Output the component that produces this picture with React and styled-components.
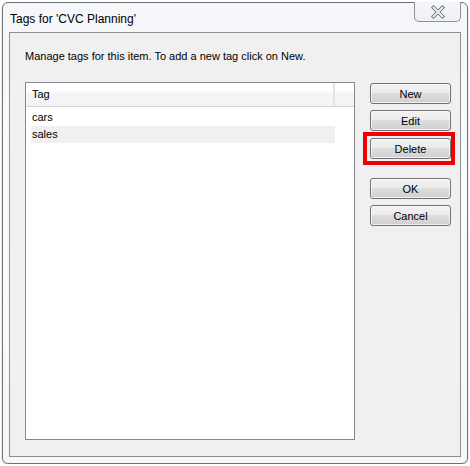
import styled, { createGlobalStyle } from "styled-components";

const GlobalStyle = createGlobalStyle`
  body {
    margin: 0;
    background: #ffffff;
    font-family: "Liberation Sans", Arial, sans-serif;
    font-size: 11px;
    color: #000;
  }
`;

const Window = styled.div`
  margin: 2px 0 0 2px;
  width: 466px;
  height: 462px;
  border: 1px solid #6f7275;
  border-radius: 6px;
  background: linear-gradient(180deg, #f4f6f9 0%, #fbfcfd 40%, #f6f7f9 100%);
  box-shadow: 0 1px 2px rgba(0, 0, 0, 0.25);
  display: flex;
  flex-direction: column;
  padding: 0 6px 6px 6px;
  box-sizing: border-box;
`;

const TitleBar = styled.div`
  height: 29px;
  display: flex;
  justify-content: space-between;
  align-items: flex-start;
`;

const Title = styled.div`
  padding: 9px 0 0 1px;
  font-size: 12px;
`;

const CloseButton = styled.div`
  width: 45px;
  height: 19px;
  margin-top: -1px;
  border: 1px solid #8d9196;
  border-top: none;
  border-radius: 0 0 5px 5px;
  background: linear-gradient(180deg, #f6f7f9, #eef0f3);
  display: flex;
  align-items: center;
  justify-content: center;
`;

const Panel = styled.div`
  flex: 1;
  border: 1px solid #8e8f94;
  background: #f0f0f0;
  padding: 16px 9px 16px 15px;
  display: flex;
  flex-direction: column;
  box-sizing: border-box;
`;

const Description = styled.div`
  line-height: 15px;
  margin-bottom: 18px;
`;

const Body = styled.div`
  flex: 1;
  display: flex;
  gap: 15px;
`;

const ListBox = styled.div`
  width: 330px;
  flex-shrink: 0;
  border: 1px solid #828790;
  background: #fff;
  box-sizing: border-box;
`;

const Header = styled.div`
  height: 24px;
  display: flex;
  border-bottom: 1px solid #d5d5d5;
  background: linear-gradient(180deg, #ffffff 0%, #ffffff 30%, #f3f4f6 50%, #f3f4f6 100%);
  box-sizing: border-box;
`;

const HeaderCell = styled.div`
  width: 309px;
  padding-left: 6px;
  box-sizing: border-box;
  line-height: 23px;
  border-right: 2px solid #e3e4e6;
`;

const Rows = styled.div`
  padding: 2px 0 0 5px;
`;

const Row = styled.div`
  width: 304px;
  height: 17px;
  line-height: 17px;
  padding-left: 1px;
  box-sizing: border-box;
  background: ${(p) => (p.$selected ? "#f0f0f0" : "transparent")};
`;

const Buttons = styled.div`
  width: 81px;
  flex-shrink: 0;
  display: flex;
  flex-direction: column;
  padding-top: 1px;
`;

const Highlight = styled.div`
  margin: 1px -4px 0 -7px;
  padding: 2px 0 2px 3px;
  border: 4px solid #f00000;
  width: 92px;
  box-sizing: border-box;
`;

const Button = styled.div`
  width: 81px;
  height: 21px;
  box-sizing: border-box;
  border: 1px solid #707070;
  border-radius: 3px;
  background: linear-gradient(180deg, #f2f2f2 0%, #ebebeb 49%, #dddddd 50%, #cfcfcf 100%);
  box-shadow: inset 0 0 0 1px rgba(255, 255, 255, 0.7);
  display: flex;
  align-items: center;
  justify-content: center;
  margin-top: ${(p) => p.$gap || 0}px;
`;

const CloseIcon = () => (
  <svg width="16" height="14" viewBox="0 0 16 14">
    <path d="M3.5 2.5 L12.5 11.5 M12.5 2.5 L3.5 11.5" stroke="#6a707a" strokeWidth="3.6" strokeLinecap="square" />
    <path d="M3.5 2.5 L12.5 11.5 M12.5 2.5 L3.5 11.5" stroke="#f5f6f8" strokeWidth="1.8" strokeLinecap="square" />
  </svg>
);

const App = () => {
  const tags = ["cars", "sales"];
  return (
    <>
      <GlobalStyle />
      <Window>
        <TitleBar>
          <Title>Tags for 'CVC Planning'</Title>
          <CloseButton>
            <CloseIcon />
          </CloseButton>
        </TitleBar>
        <Panel>
          <Description>Manage tags for this item. To add a new tag click on New.</Description>
          <Body>
            <ListBox>
              <Header>
                <HeaderCell>Tag</HeaderCell>
              </Header>
              <Rows>
                {tags.map((t, i) => (
                  <Row key={t} $selected={i === 1}>
                    {t}
                  </Row>
                ))}
              </Rows>
            </ListBox>
            <Buttons>
              <Button>New</Button>
              <Button $gap={6}>Edit</Button>
              <Highlight>
                <Button>Delete</Button>
              </Highlight>
              <Button $gap={13}>OK</Button>
              <Button $gap={6}>Cancel</Button>
            </Buttons>
          </Body>
        </Panel>
      </Window>
    </>
  );
};

export default App;
